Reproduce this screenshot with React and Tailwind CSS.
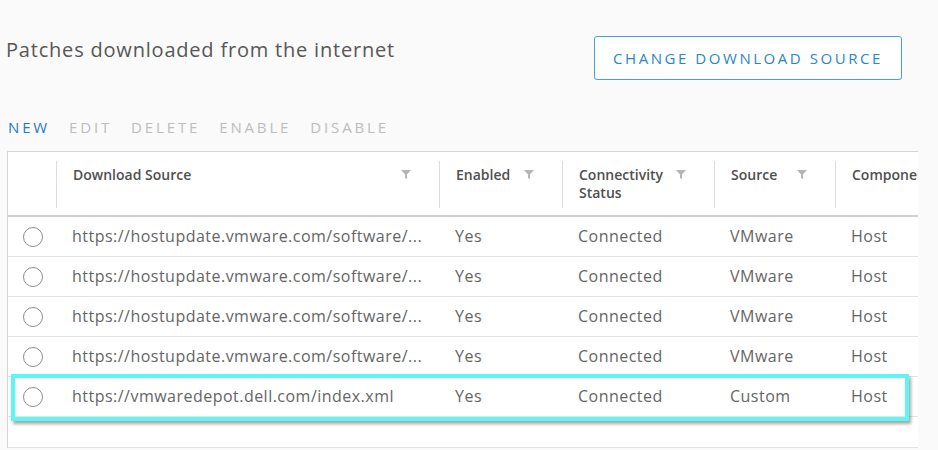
import React from "react";

const rows = [
  { url: "https://hostupdate.vmware.com/software/...", enabled: "Yes", status: "Connected", source: "VMware", comp: "Host" },
  { url: "https://hostupdate.vmware.com/software/...", enabled: "Yes", status: "Connected", source: "VMware", comp: "Host" },
  { url: "https://hostupdate.vmware.com/software/...", enabled: "Yes", status: "Connected", source: "VMware", comp: "Host" },
  { url: "https://hostupdate.vmware.com/software/...", enabled: "Yes", status: "Connected", source: "VMware", comp: "Host" },
  { url: "https://vmwaredepot.dell.com/index.xml", enabled: "Yes", status: "Connected", source: "Custom", comp: "Host", marked: true },
];

const cols = "grid grid-cols-[48px_383px_123px_152px_121px_160px]";

const Filter = () => (
  <svg width="10" height="9" viewBox="0 0 10 9" className="shrink-0 mt-[4px]">
    <path d="M0 0h10L6 4.5V9L4 8V4.5z" fill="#b5b5b5" />
  </svg>
);

const HeadCell = ({ children, filter = true }) => (
  <div className="pt-[9px] pb-[7px]">
    <div className="h-full border-l border-[#dcdcdc] flex justify-between pl-4 pr-[28px] pt-[5px]">
      <span className="text-[14px] leading-[18px] font-semibold text-[#4f4f4f] whitespace-nowrap">{children}</span>
      {filter && <Filter />}
    </div>
  </div>
);

const Row = ({ row }) => (
  <div className={`${cols} relative h-[40px] border-b border-[#e3e3e3] items-center text-[16px] tracking-[0.03em] text-[#656565]`}>
    <div className="flex justify-center pl-[2px]">
      <span className="w-[20px] h-[20px] rounded-full border border-[#8f8f8f] bg-white"></span>
    </div>
    <div className="px-4 whitespace-nowrap mt-[-2px]">{row.url}</div>
    <div className="px-4 mt-[-2px]">{row.enabled}</div>
    <div className="px-4 mt-[-2px]">{row.status}</div>
    <div className="px-4 mt-[-2px]">{row.source}</div>
    <div className="px-4 mt-[-2px]">{row.comp}</div>
    {row.marked && (
      <div className="absolute left-[3px] w-[898px] top-[-3px] h-[47px] border-[4px] border-[#5cf6f4] shadow-[2px_3px_3px_rgba(0,0,0,0.35)]"></div>
    )}
  </div>
);

export default function App() {
  return (
    <div
      className="w-[938px] h-[450px] overflow-hidden bg-[#fafafa]"
      style={{ fontFamily: '"Open Sans", "Liberation Sans", sans-serif' }}
    >
      <div className="flex items-center justify-between pt-[36px] pl-[6px] pr-[36px]">
        <h1 className="text-[20px] tracking-[0.04em] text-[#575757] mt-[-16px]">Patches downloaded from the internet</h1>
        <button className="w-[308px] h-[44px] border border-[#45a0d6] rounded-[3px] bg-white text-[15px] font-medium tracking-[0.17em] text-[#2a86c5]">
          CHANGE DOWNLOAD SOURCE
        </button>
      </div>

      <div className="flex gap-[19px] pl-[8px] mt-[36px] h-[22px] items-center text-[15px] font-medium tracking-[0.19em]">
        <span className="text-[#1f7bbd]">NEW</span>
        <span className="text-[#bdbdbd]">EDIT</span>
        <span className="text-[#bdbdbd]">DELETE</span>
        <span className="text-[#bdbdbd]">ENABLE</span>
        <span className="text-[#bdbdbd]">DISABLE</span>
      </div>

      <div className="ml-[7px] mt-[13px] w-[911px] overflow-hidden bg-white border-l border-t border-[#d5d5d5]">
        <div className="w-[987px]">
          <div className={`${cols} h-[65px] border-b-2 border-[#cfcfcf]`}>
            <div></div>
            <HeadCell>Download Source</HeadCell>
            <HeadCell>Enabled</HeadCell>
            <HeadCell>Connectivity<br />Status</HeadCell>
            <HeadCell>Source</HeadCell>
            <HeadCell filter={false}>Components</HeadCell>
          </div>
          {rows.map((row, i) => (
            <Row key={i} row={row} />
          ))}
          <div className="h-[31px] border-b border-[#e3e3e3]"></div>
        </div>
      </div>
    </div>
  );
}
